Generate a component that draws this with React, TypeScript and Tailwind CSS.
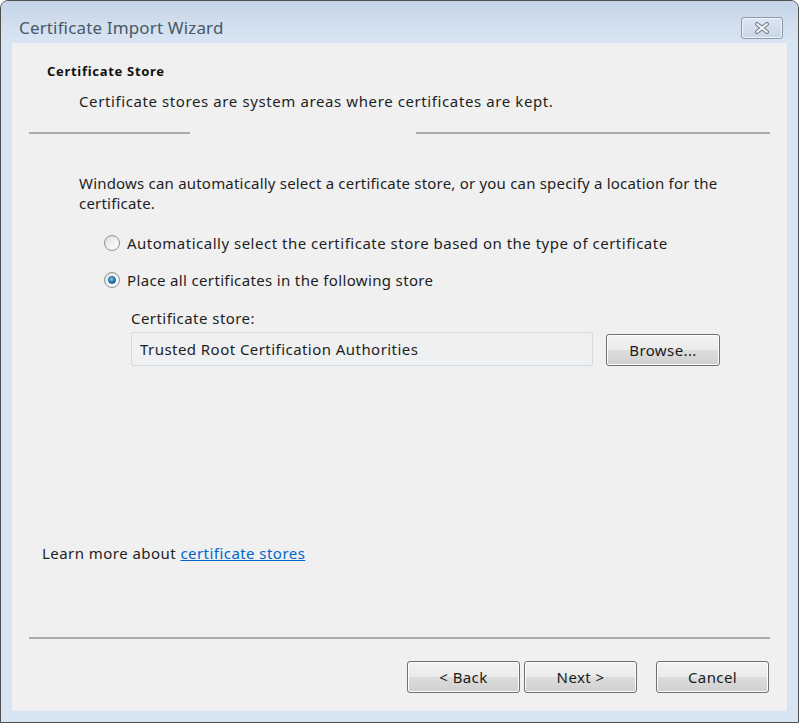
import React from "react";

const font = "font-['Segoe_UI','Noto_Sans','DejaVu_Sans',sans-serif]";

const Radio = ({ checked }: { checked?: boolean }) => (
  <span className="relative w-[16px] h-[16px] rounded-full border border-[#8d8f91] bg-gradient-to-br from-[#dcdcdc] via-[#f2f2f2] to-[#ffffff] flex items-center justify-center shrink-0">
    {checked && (
      <span className="w-[8px] h-[8px] rounded-full bg-[radial-gradient(circle_at_40%_35%,#7fd0f5,#1b77b8_60%,#0b4f86)] border border-[#1a5b8e]" />
    )}
  </span>
);

const Button = ({ label, className = "" }: { label: string; className?: string }) => (
  <button
    className={`h-[32px] rounded-[3px] border border-[#707070] bg-[linear-gradient(#f2f2f2,#ebebeb_50%,#dddddd_50%,#cfcfcf)] shadow-[inset_0_0_0_1px_#fcfcfc] text-[15px] tracking-[0.4px] text-[#1a1a1a] ${className}`}
  >
    {label}
  </button>
);

export default function App() {
  return (
    <div className={`w-[799px] h-[723px] ${font} text-[15px] tracking-[0.45px] text-[#1e1e1e]`}>
      <div className="w-full h-full rounded-t-[8px] border border-[#4f4f4f] bg-[#d7e4f2] flex flex-col overflow-hidden">
        {/* title bar */}
        <div className="h-[42px] shrink-0 flex items-center justify-between pl-[18px] pr-[15px] bg-[linear-gradient(#c4d4e6,#d2dfee_60%,#d8e5f3)]">
          <span className="text-[17px] tracking-[0.15px] text-[#4a5868] pt-[11px]">Certificate Import Wizard</span>
          <span className="mt-[11px] w-[42px] h-[22px] rounded-[3px] border border-[#8898ad] bg-[linear-gradient(#dde7f1,#c9d6e5)] shadow-[inset_0_0_0_1px_#eef3f8] flex items-center justify-center">
            <svg width="16" height="12" viewBox="0 0 16 12">
              <path d="M3 2 L13 10 M13 2 L3 10" stroke="#6f7a87" strokeWidth="4" strokeLinecap="round" />
              <path d="M3 2 L13 10 M13 2 L3 10" stroke="#f4f6f8" strokeWidth="2" strokeLinecap="round" />
            </svg>
          </span>
        </div>

        {/* page body */}
        <div className="mx-[11px] mb-[11px] flex-1 bg-[#f0f0f0] flex flex-col">
          <div className="pl-[35px] pt-[19px] h-[39px] flex items-center text-[13px] tracking-[0.7px] font-bold text-[#111]">
            Certificate Store
          </div>
          <div className="pl-[67px] mt-[9px] h-[20px] flex items-center tracking-[0.6px]">
            Certificate stores are system areas where certificates are kept.
          </div>

          <div className="mt-[21px] mx-[17px] flex justify-between">
            <div className="w-[161px] h-[2px] bg-[#ababab]" />
            <div className="w-[354px] h-[2px] bg-[#ababab]" />
          </div>

          <p className="mt-[39px] pl-[67px] pr-[50px] leading-[20px] tracking-[0.2px]">
            Windows can automatically select a certificate store, or you can specify a location for
            the certificate.
          </p>

          <label className="mt-[20px] pl-[92px] h-[20px] flex items-center gap-[7px]">
            <Radio />
            <span className="tracking-[0.5px]">Automatically select the certificate store based on the type of certificate</span>
          </label>
          <label className="mt-[17px] pl-[92px] h-[20px] flex items-center gap-[7px]">
            <Radio checked />
            <span className="tracking-[0.35px]">Place all certificates in the following store</span>
          </label>

          <div className="mt-[18px] pl-[119px] h-[20px] flex items-center">Certificate store:</div>
          <div className="mt-[4px] pl-[119px] flex items-center">
            <div className="w-[462px] h-[34px] rounded-[2px] border border-[#d3d9e0] bg-[#eff0f1] flex items-center pl-[8px]">
              Trusted Root Certification Authorities
            </div>
            <Button label="Browse..." className="ml-[13px] w-[114px] mt-[2px]" />
          </div>

          <div className="mt-[177px] pl-[30px] h-[20px] flex items-center">
            <span>Learn more about&nbsp;</span>
            <a href="#" className="text-[#0066cc] underline">certificate stores</a>
          </div>

          <div className="mt-[74px] mx-[17px] h-[2px] bg-[#ababab]" />

          <div className="mt-[22px] pr-[18px] flex justify-end">
            <Button label="< Back" className="w-[113px]" />
            <Button label="Next >" className="w-[113px] ml-[4px]" />
            <Button label="Cancel" className="w-[113px] ml-[19px]" />
          </div>
        </div>
      </div>
    </div>
  );
}
